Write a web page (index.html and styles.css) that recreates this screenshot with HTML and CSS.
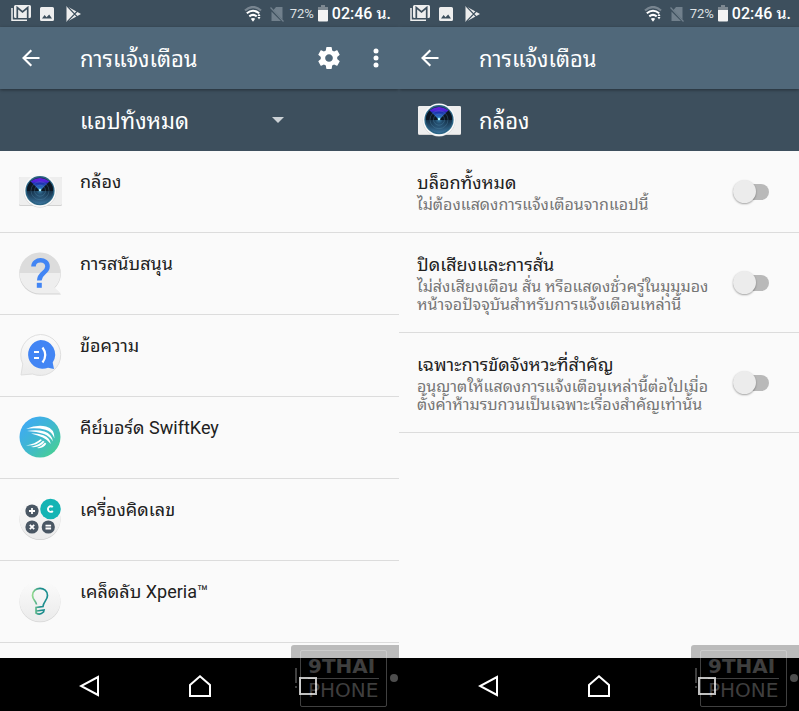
FILE: index.html
```html
<!DOCTYPE html>
<html lang="th">
<head>
  <meta charset="UTF-8">
  <meta name="viewport" content="width=device-width, initial-scale=1.0">
  <title>การแจ้งเตือน</title>
  <link rel="stylesheet" href="styles.css">
</head>
<body>
  <!-- shared icons -->
  <svg class="sprite" aria-hidden="true">
    <defs>
      <linearGradient id="paper" x1="0" y1="0" x2="0" y2="1">
        <stop offset="0" stop-color="#fbfbfb"/><stop offset="1" stop-color="#ebebeb"/>
      </linearGradient>
      <linearGradient id="swift" x1="0" y1="0" x2="1" y2="1">
        <stop offset="0.1" stop-color="#3fa9f5"/><stop offset="0.5" stop-color="#3fb8cf"/><stop offset="0.9" stop-color="#48cf94"/>
      </linearGradient>
      <linearGradient id="bulb" x1="0" y1="0" x2="1" y2="0">
        <stop offset="0" stop-color="#8ed88c"/><stop offset="0.5" stop-color="#1e8c8c"/><stop offset="1" stop-color="#1a8f90"/>
      </linearGradient>
      <radialGradient id="lens">
        <stop offset="0" stop-color="#3b7fa8"/><stop offset="0.3" stop-color="#1c4260"/><stop offset="0.7" stop-color="#122a40"/><stop offset="1" stop-color="#16344d"/>
      </radialGradient>
      <linearGradient id="flare" x1="0" y1="0" x2="0" y2="1">
        <stop offset="0" stop-color="#6a1fe0"/><stop offset="0.3" stop-color="#4a25d8"/><stop offset="0.4" stop-color="#1c2fb0"/><stop offset="1" stop-color="#3a9fc8"/>
      </linearGradient>
      <linearGradient id="glass" x1="0" y1="0" x2="0" y2="1">
        <stop offset="0.5" stop-color="#3f7fae" stop-opacity="0"/><stop offset="1" stop-color="#4b8fbe" stop-opacity="0.7"/>
      </linearGradient>
    </defs>
    <symbol id="i-gmail" viewBox="0 0 20 17">
      <path d="M1 3v12.200h15" fill="none" stroke="#eee" stroke-width="1.500"/>
      <path d="M4.500 0h14a1.500 1.500 0 0 1 1.500 1.500v10a1.500 1.500 0 0 1-1.500 1.500h-14A1.500 1.500 0 0 1 3 11.500v-10A1.500 1.500 0 0 1 4.500 0z" fill="#eee"/>
      <path d="M6.300 13V2.500l5.200 4.300 5.200-4.300V13" fill="none" stroke="#3d4f5d" stroke-width="1.700"/>
    </symbol>
    <symbol id="i-image" viewBox="0 0 14 14">
      <path d="M1.500 0h11A1.500 1.500 0 0 1 14 1.500v11a1.500 1.500 0 0 1-1.500 1.500h-11A1.500 1.500 0 0 1 0 12.500v-11A1.500 1.500 0 0 1 1.500 0z" fill="#eee"/>
      <path d="M2 11.500l2.600-3.500 1.900 2.300L9.200 7.500 12 11.500z" fill="#3d4f5d"/>
    </symbol>
    <symbol id="i-play" viewBox="0 0 15 16">
      <path d="M.500 0L15 8 .500 16z" fill="#eee"/>
      <path d="M1 0l10.500 11M1 16L11.500 5" stroke="#3d4f5d" stroke-width="1.100"/>
    </symbol>
    <symbol id="i-wifi" viewBox="0 0 18 16">
      <path d="M1 4.500Q9-2.500 17 4.500" fill="none" stroke="#788590" stroke-width="2.200"/>
      <g fill="none" stroke="#fff" stroke-width="2"><path d="M2.800 7.300q6.200-5 12.400 0M5.300 10.400q3.700-3 7.400 0"/></g>
      <path d="M6.800 12.800q2.200-1.600 4.400 0L9 15.800z" fill="#fff"/>
      <path d="M13.500 10l1.500-2.500 1.500 2.500zM13.500 11l1.500 2.500 1.500-2.500z" fill="#fff"/>
    </symbol>
    <symbol id="i-nosim" viewBox="0 0 14 16">
      <path d="M6 1h6.500v12.500L3.500 4zM1.500 5.500L11 15H1.500z" fill="#71808c"/>
      <path d="M.500 1.500L13.500 15.500" stroke="#71808c" stroke-width="1.200"/>
    </symbol>
    <symbol id="i-battery" viewBox="0 0 10 17">
      <path d="M3 0h4v2h3v3H0V2h3z" fill="#7d8891"/><path d="M0 5h10v10.500a1 1 0 0 1-1 1H1a1 1 0 0 1-1-1z" fill="#f4f4f4"/>
    </symbol>
    <symbol id="i-back" viewBox="0 0 18 18">
      <path d="M17.500 9H2M9.300 1.200L1.500 9l7.800 7.800" fill="none" stroke="#fff" stroke-width="2.100"/>
    </symbol>
    <symbol id="i-gear" viewBox="2 2 20 20">
      <path fill="#fff" d="M19.430 12.980c.040-.320.070-.640.070-.980s-.030-.660-.070-.980l2.110-1.650c.190-.150.240-.420.120-.640l-2-3.460c-.120-.220-.390-.300-.610-.220l-2.490 1c-.520-.400-1.080-.730-1.690-.980l-.380-2.650C14.460 2.180 14.250 2 14 2h-4c-.250 0-.460.180-.490.420l-.380 2.650c-.610.250-1.170.590-1.690.980l-2.490-1c-.230-.090-.490 0-.610.220l-2 3.460c-.130.220-.070.490.120.640l2.110 1.650c-.040.320-.070.650-.070.980s.030.660.070.980l-2.110 1.650c-.190.150-.240.420-.120.640l2 3.460c.120.220.390.300.610.220l2.490-1c.520.400 1.080.730 1.690.980l.380 2.650c.030.240.240.420.490.420h4c.250 0 .460-.180.490-.420l.380-2.650c.610-.250 1.170-.590 1.690-.980l2.490 1c.230.090.490 0 .610-.220l2-3.460c.120-.220.070-.490-.120-.640l-2.110-1.650zM12 15.500c-1.930 0-3.500-1.570-3.500-3.500s1.570-3.500 3.500-3.500 3.500 1.570 3.500 3.500-1.570 3.500-3.500 3.500z"/>
    </symbol>
    <symbol id="i-camera" viewBox="0 0 44 44">
      <rect x="1" y="8" width="43" height="29" rx="1.500" fill="#d2d2d2"/>
      <rect x="1" y="8" width="43" height="28" rx="1.500" fill="#eee"/>
      <circle cx="22" cy="22.300" r="16.300" fill="#d0d0d0"/>
      <circle cx="22" cy="21.700" r="16.200" fill="#f9f9f9"/>
      <circle cx="22" cy="21.700" r="14.600" fill="#2b6585"/>
      <circle cx="22" cy="21.700" r="13.200" fill="url(#lens)"/>
      <circle cx="22" cy="21.700" r="13.200" fill="url(#glass)"/>
      <path d="M22 22L12.500 12.500Q22 5.500 31.500 12.500z" fill="url(#flare)"/>
      <path d="M22 22L12.500 12.500Q8.500 17 9 22zM22 22l9.500-9.500Q35.500 17 35 22z" fill="#0c1622"/>
      <g fill="none" stroke="#5a93b5" stroke-opacity=".4" stroke-width=".8"><circle cx="22" cy="21.700" r="9"/><circle cx="22" cy="21.700" r="5.500"/></g>
      <circle cx="22" cy="21" r="1.300" fill="#a8f0ff"/>
    </symbol>
    <symbol id="i-nav-back" viewBox="0 0 22 22">
      <path d="M19 2v18L2 11z" fill="none" stroke="#fff" stroke-width="2"/>
    </symbol>
    <symbol id="i-nav-home" viewBox="0 0 22 22">
      <path d="M1 10L11 1.300 21 10v11H1z" fill="none" stroke="#fff" stroke-width="2"/>
    </symbol>
    <symbol id="i-nav-recent" viewBox="0 0 22 22">
      <path d="M1 3h16v16H1z" fill="none" stroke="#fff" stroke-width="2"/>
    </symbol>
  </svg>

  <div class="container">
    <!-- app list -->
    <div class="phone">
      <div class="status">
        <svg class="s-gmail"><use href="#i-gmail"/></svg>
        <svg class="s-image"><use href="#i-image"/></svg>
        <svg class="s-play"><use href="#i-play"/></svg>
        <div class="status-right">
          <svg class="s-wifi"><use href="#i-wifi"/></svg>
          <svg class="s-nosim"><use href="#i-nosim"/></svg>
          <span class="percent">72%</span>
          <svg class="s-battery"><use href="#i-battery"/></svg>
          <span class="clock">02:46 น.</span>
        </div>
      </div>
      <header class="appbar">
        <button class="back" aria-label="กลับ"><svg><use href="#i-back"/></svg></button>
        <h1 class="title">การแจ้งเตือน</h1>
        <button class="gear" aria-label="การตั้งค่า"><svg><use href="#i-gear"/></svg></button>
        <button class="more" aria-label="เพิ่มเติม">
          <svg viewBox="0 0 6 20"><circle cx="3" cy="3" r="2.500" fill="#fff"/><circle cx="3" cy="10" r="2.500" fill="#fff"/><circle cx="3" cy="17" r="2.500" fill="#fff"/></svg>
        </button>
      </header>
      <div class="subbar">
        <select class="filter" aria-label="ตัวกรอง">
          <option>แอปทั้งหมด</option>
        </select>
        <svg class="caret" viewBox="0 0 12 6"><path d="M0 0h12L6 6z" fill="#ccd2d6"/></svg>
      </div>
      <ul class="list">
        <li class="app">
          <svg class="app-icon"><use href="#i-camera"/></svg>
          <span class="app-name">กล้อง</span>
        </li>
        <li class="app">
          <svg class="app-icon" viewBox="0 0 44 44">
            <path d="M22 2a20.500 20.500 0 1 0 0 41.500h21l-6.500-6.200A20.500 20.500 0 0 0 22 2z" fill="#d3d3d3"/>
            <path d="M22 1.500A20.500 20.500 0 1 0 22 42.500h21l-6.500-6A20.500 20.500 0 0 0 22 1.500z" fill="#eee"/>
            <path d="M1.500 22a20.500 20.500 0 0 1 41 0z" fill="#dcdcdc"/>
            <path d="M15.500 15.500c0-8 14-8.500 14 0 0 6.500-8.200 6-8.200 14" fill="none" stroke="#4285f4" stroke-width="4.600"/>
            <path d="M18.800 31.800h5v5h-5z" fill="#4285f4"/>
          </svg>
          <span class="app-name">การสนับสนุน</span>
        </li>
        <li class="app">
          <svg class="app-icon" viewBox="0 0 44 44">
            <path d="M22.500 1.500a20.500 20.500 0 1 1-8 39.500L3 42l1.800-11A20.500 20.500 0 0 1 22.500 1.500z" fill="url(#paper)" stroke="#dfdfdf"/>
            <path d="M22.500 7a14.500 14.500 0 0 1 12.200 22.500L36 36l-6-1.200A14.500 14.500 0 1 1 22.500 7z" fill="#4285f4"/>
            <path d="M16 19h5M16 25h5M24.500 14.500q5.500 7.500 0 15" fill="none" stroke="#fff" stroke-width="2.200"/>
          </svg>
          <span class="app-name">ข้อความ</span>
        </li>
        <li class="app">
          <svg class="app-icon" viewBox="0 0 44 44">
            <circle cx="22" cy="22" r="20.500" fill="url(#swift)"/>
            <path d="M8 13.800Q19 9.500 28 11.500q8.500 2 8.500 12-2.500-7-9-8.800Q19 12.500 8 13.800zM9 16q10-1.500 17.500.500 7.500 2.500 8.500 10-3.500-5.500-9-7.500Q19 16.500 9 16zM13 18.600q7-.600 12.500 1.700 6.500 2.700 7.300 8.700-3.500-4.500-8-6.500-4.500-2-11.800-3.900zM8 30.500q9-1.500 14.500-6.200L24 25q-5 6-16 5.500zM13 32q8-2 12-6.200l1.500 1Q22 33 13 32zM19 33q5-2 8-5.500l1.300 1.300Q25 34 19 33z" fill="#fff"/>
          </svg>
          <span class="app-name">คีย์บอร์ด SwiftKey</span>
        </li>
        <li class="app">
          <svg class="app-icon" viewBox="0 0 44 44">
            <circle cx="22" cy="22.500" r="20.500" fill="#cfcfcf"/>
            <circle cx="22" cy="21.800" r="20.500" fill="url(#paper)"/>
            <g fill="#4a5764"><circle cx="14" cy="14" r="6.600"/><circle cx="14" cy="30" r="6.600"/><circle cx="30.300" cy="30" r="6.600"/></g>
            <circle cx="32.500" cy="12" r="10.300" fill="#14b4b4"/>
            <path d="M11 14h6M14 11v6M11.800 27.800l4.400 4.400M16.200 27.800l-4.400 4.400M27.500 28.700h5.600M27.500 31.500h5.600" stroke="#fff" stroke-width="1.800"/>
            <path d="M34.800 10.200a2.800 2.800 0 1 0 0 3.800" fill="none" stroke="#fff" stroke-width="1.900"/>
          </svg>
          <span class="app-name">เครื่องคิดเลข</span>
        </li>
        <li class="app">
          <svg class="app-icon" viewBox="0 0 44 44">
            <circle cx="22" cy="22.800" r="20.500" fill="#d6d6d6"/>
            <circle cx="22" cy="22" r="20.500" fill="url(#paper)"/>
            <path d="M18.500 25.500c-.500-4-4-4.500-4-9 0-9.500 15-9.500 15 0 0 4.500-4 6-4.500 11l-7 1v5.500q4 2.500 7.500-1l.500-2-7.500 1" fill="none" stroke="url(#bulb)" stroke-width="1.700"/>
          </svg>
          <span class="app-name">เคล็ดลับ Xperia™</span>
        </li>
      </ul>
      <nav class="navbar">
        <button aria-label="ย้อนกลับ"><svg><use href="#i-nav-back"/></svg></button>
        <button aria-label="หน้าแรก"><svg><use href="#i-nav-home"/></svg></button>
        <button aria-label="ล่าสุด"><svg><use href="#i-nav-recent"/></svg></button>
      </nav>
      <div class="mark">
        <span class="mark-bang"></span>
        <div class="mark-frame"><b>9THAI</b><span>PHONE</span></div>
        <span class="mark-dot"></span>
      </div>
    </div>

    <!-- notification settings of one app -->
    <div class="phone">
      <div class="status">
        <svg class="s-gmail"><use href="#i-gmail"/></svg>
        <svg class="s-image"><use href="#i-image"/></svg>
        <svg class="s-play"><use href="#i-play"/></svg>
        <div class="status-right">
          <svg class="s-wifi"><use href="#i-wifi"/></svg>
          <svg class="s-nosim"><use href="#i-nosim"/></svg>
          <span class="percent">72%</span>
          <svg class="s-battery"><use href="#i-battery"/></svg>
          <span class="clock">02:46 น.</span>
        </div>
      </div>
      <header class="appbar">
        <button class="back" aria-label="กลับ"><svg><use href="#i-back"/></svg></button>
        <h1 class="title">การแจ้งเตือน</h1>
      </header>
      <div class="subbar subbar-app">
        <svg class="app-icon"><use href="#i-camera"/></svg>
        <h2 class="title">กล้อง</h2>
      </div>
      <ul class="list">
        <li class="setting">
          <div class="setting-text">
            <label class="setting-name" for="block">บล็อกทั้งหมด</label>
            <p class="setting-desc">ไม่ต้องแสดงการแจ้งเตือนจากแอปนี้</p>
          </div>
          <input class="switch" type="checkbox" id="block">
        </li>
        <li class="setting">
          <div class="setting-text">
            <label class="setting-name" for="silent">ปิดเสียงและการสั่น</label>
            <p class="setting-desc">ไม่ส่งเสียงเตือน สั่น หรือแสดงชั่วครู่ในมุมมอง<br>หน้าจอปัจจุบันสำหรับการแจ้งเตือนเหล่านี้</p>
          </div>
          <input class="switch" type="checkbox" id="silent">
        </li>
        <li class="setting">
          <div class="setting-text">
            <label class="setting-name" for="priority">เฉพาะการขัดจังหวะที่สำคัญ</label>
            <p class="setting-desc">อนุญาตให้แสดงการแจ้งเตือนเหล่านี้ต่อไปเมื่อ<br>ตั้งค่าห้ามรบกวนเป็นเฉพาะเรื่องสำคัญเท่านั้น</p>
          </div>
          <input class="switch" type="checkbox" id="priority">
        </li>
      </ul>
      <nav class="navbar">
        <button aria-label="ย้อนกลับ"><svg><use href="#i-nav-back"/></svg></button>
        <button aria-label="หน้าแรก"><svg><use href="#i-nav-home"/></svg></button>
        <button aria-label="ล่าสุด"><svg><use href="#i-nav-recent"/></svg></button>
      </nav>
      <div class="mark">
        <span class="mark-bang"></span>
        <div class="mark-frame"><b>9THAI</b><span>PHONE</span></div>
        <span class="mark-dot"></span>
      </div>
    </div>
  </div>
</body>
</html>
```
FILE: styles.css
```css
*{
  box-sizing: border-box;
}
body{
  margin: 0;
  font-family: Roboto, "Noto Sans Thai Looped", "Noto Sans Thai", "Noto Sans", sans-serif;
  color: #212121;
  background-color: #fafafa;
}
h1, h2, p, ul{
  margin: 0;
  padding: 0;
}
button{
  padding: 0;
  border: 0;
  background: none;
}
svg{
  display: block;
  flex: none;
}
.sprite{
  position: absolute;
  width: 0;
  height: 0;
}
.container{
  display: grid;
  grid-template-columns: 399fr 400fr;
  min-height: 100vh;
}
.phone{
  position: relative;
  display: flex;
  flex-direction: column;
  min-width: 0;
  overflow: hidden;
}

/* status bar */
.status{
  display: flex;
  align-items: center;
  height: 27px;
  padding: 0 8px 0 11px;
  color: #fff;
  background-color: #3d4f5d;
}
.s-gmail{
  width: 20px;
  height: 17px;
  margin-right: 9px;
}
.s-image{
  width: 14px;
  height: 14px;
  margin-right: 12px;
}
.s-play{
  width: 15px;
  height: 16px;
}
.status-right{
  display: flex;
  align-items: center;
  margin-left: auto;
}
.s-wifi{
  width: 18px;
  height: 16px;
  margin-right: 8px;
}
.s-nosim{
  width: 14px;
  height: 16px;
  margin-right: 6px;
}
.percent{
  font-size: 13px;
  margin-right: 4px;
  color: #dde1e4;
}
.s-battery{
  width: 10px;
  height: 17px;
  margin-right: 4px;
}
.clock{
  font-size: 16px;
  font-weight: 500;
  line-height: 27px;
}

/* title bars */
.appbar{
  position: relative;
  display: flex;
  align-items: center;
  height: 62px;
  padding: 0 20px 0 22px;
  background-color: #50687a;
  box-shadow: 0 1px 3px rgba(0, 0, 0, 0.4);
}
.back svg{
  width: 18px;
  height: 18px;
}
.back{
  margin-right: 40px;
}
.title{
  flex: 1;
  padding-top: 4px;
  font-size: 22px;
  font-weight: 400;
  line-height: 32px;
  color: #fff;
}
.gear svg{
  width: 22px;
  height: 22px;
}
.gear{
  margin-right: 33px;
}
.more svg{
  width: 6px;
  height: 20px;
}
.subbar{
  display: flex;
  align-items: center;
  height: 62px;
  padding-left: 80px;
  background-color: #3d4f5d;
}
.subbar-app{
  padding-left: 18px;
}
.filter{
  width: 192px;
  height: 48px;
  padding: 2px 0 0;
  border: 0;
  appearance: none;
  font-family: inherit;
  font-size: 22px;
  color: #fff;
  background: none;
}
.caret{
  width: 12px;
  height: 6px;
}

/* lists */
.list{
  flex: 1;
  list-style: none;
  background-color: #fafafa;
}
.app{
  display: flex;
  height: 82px;
  padding: 18px;
  border-bottom: 1px solid #dcdcdc;
}
.app-icon{
  width: 44px;
  height: 44px;
  margin-right: 18px;
}
.app-name{
  font-size: 18px;
  line-height: 25px;
}
.setting{
  display: flex;
  align-items: center;
  justify-content: space-between;
  padding: 18px 30px 18px 18px;
  border-bottom: 1px solid #dcdcdc;
}
.setting-name{
  display: block;
  font-size: 18px;
  line-height: 27px;
}
.setting-desc{
  font-size: 16px;
  line-height: 18px;
  white-space: nowrap;
  color: #757575;
}
.switch{
  display: flex;
  align-items: center;
  flex: none;
  appearance: none;
  width: 36px;
  height: 16px;
  margin: 0;
  background-color: #b9b9b9;
  border-radius: 8px;
}
.switch::before{
  content: "";
  flex: none;
  width: 23px;
  height: 23px;
  border-radius: 50%;
  background-color: #ececec;
  box-shadow: 0 1px 2px rgba(0, 0, 0, 0.35);
}

/* navigation keys */
.navbar{
  display: flex;
  align-items: center;
  justify-content: center;
  gap: 62px;
  height: 53px;
  padding-top: 3px;
  background-color: #000;
}
.navbar button{
  display: flex;
  justify-content: center;
  width: 48px;
}
.navbar svg{
  width: 22px;
  height: 22px;
}

/* watermark over the corner */
.mark{
  position: absolute;
  right: 0;
  bottom: 0;
  display: flex;
  align-items: center;
  gap: 3px;
  width: 108px;
  height: 66px;
  padding: 0 1px 0 4px;
  border-radius: 3px 0 0 0;
  background-color: rgba(0, 0, 0, 0.25);
  pointer-events: none;
}
.mark-bang{
  width: 2px;
  height: 20px;
  background: linear-gradient(#fff 75%, transparent 75%, transparent 88%, #fff 88%);
  opacity: 0.25;
}
.mark-frame{
  display: flex;
  flex-direction: column;
  width: 87px;
  height: 57px;
  padding: 4px 7px;
  border: 1px solid rgba(255, 255, 255, 0.25);
  border-radius: 2px;
  font-family: "DejaVu Sans", sans-serif;
  font-size: 20px;
  line-height: 23px;
  color: rgba(255, 255, 255, 0.25);
}
.mark-frame b{
  border-bottom: 1px solid rgba(255, 255, 255, 0.25);
}
.mark-dot{
  width: 8px;
  height: 8px;
  border-radius: 50%;
  background-color: #fff;
  opacity: 0.3;
}
```
